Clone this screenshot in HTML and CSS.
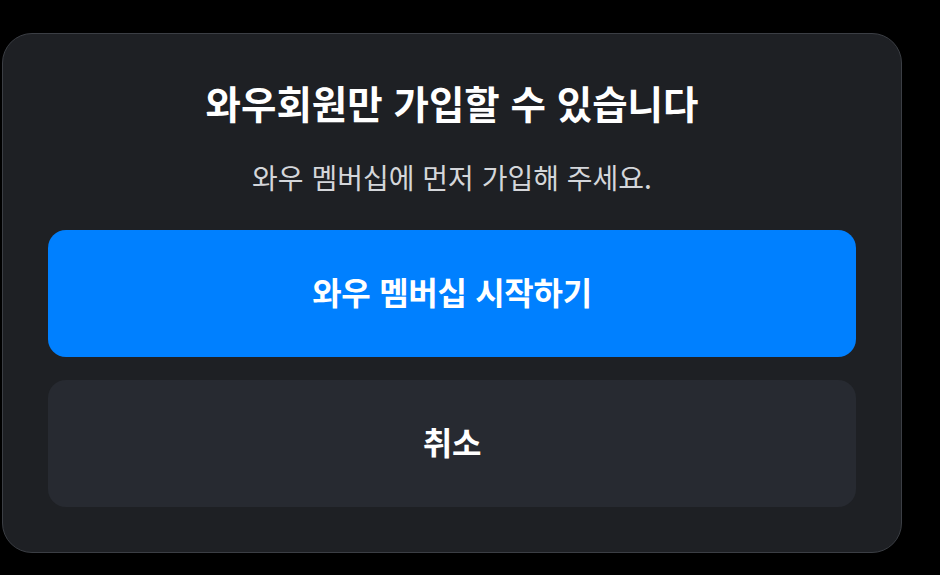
FILE: index.html
```html
<!DOCTYPE html>
<html lang="ko">
<head>
    <meta charset="UTF-8">
    <meta name="viewport" content="width=device-width, initial-scale=1.0">
    <title>와우회원 전용</title>
    <link rel="stylesheet" href="styles.css">
</head>
<body>
    <div class="modal">
        <h1 class="modal-title">와우회원만 가입할 수 있습니다</h1>
        <p class="modal-desc">와우 멤버십에 먼저 가입해 주세요.</p>
        <div class="modal-actions">
            <button class="btn btn-primary">와우 멤버십 시작하기</button>
            <button class="btn btn-cancel">취소</button>
        </div>
    </div>
</body>
</html>
```

FILE: styles.css
```css
body {
    margin: 0;
    padding: 0;
    background-color: #000;
    font-family: "Noto Sans CJK KR", "Noto Sans", sans-serif;
}
.modal {
    box-sizing: border-box;
    width: 900px;
    height: 520px;
    margin: 33px 0 0 2px;
    padding: 44px 45px 44px 45px;
    background-color: #1e2024;
    border: 1px solid #3b3e44;
    border-radius: 30px;
    display: flex;
    flex-direction: column;
    align-items: center;
}
.modal-title {
    margin: 0;
    font-size: 38.5px;
    line-height: 48px;
    font-weight: 700;
    color: #fff;
}
.modal-desc {
    margin: 33px 0 0 0;
    font-size: 28px;
    line-height: 36px;
    color: #d4d6da;
}
.modal-actions {
    width: 100%;
    margin-top: 35px;
    display: flex;
    flex-direction: column;
    gap: 23px;
}
.btn {
    height: 127px;
    padding: 0 0 5px 0;
    border: none;
    border-radius: 18px;
    font-family: inherit;
    font-size: 32px;
    font-weight: 700;
    color: #fff;
    letter-spacing: -0.3px;
    cursor: pointer;
}
.btn-primary {
    background-color: #0080ff;
}
.btn-cancel {
    background-color: #272a31;
}
```
